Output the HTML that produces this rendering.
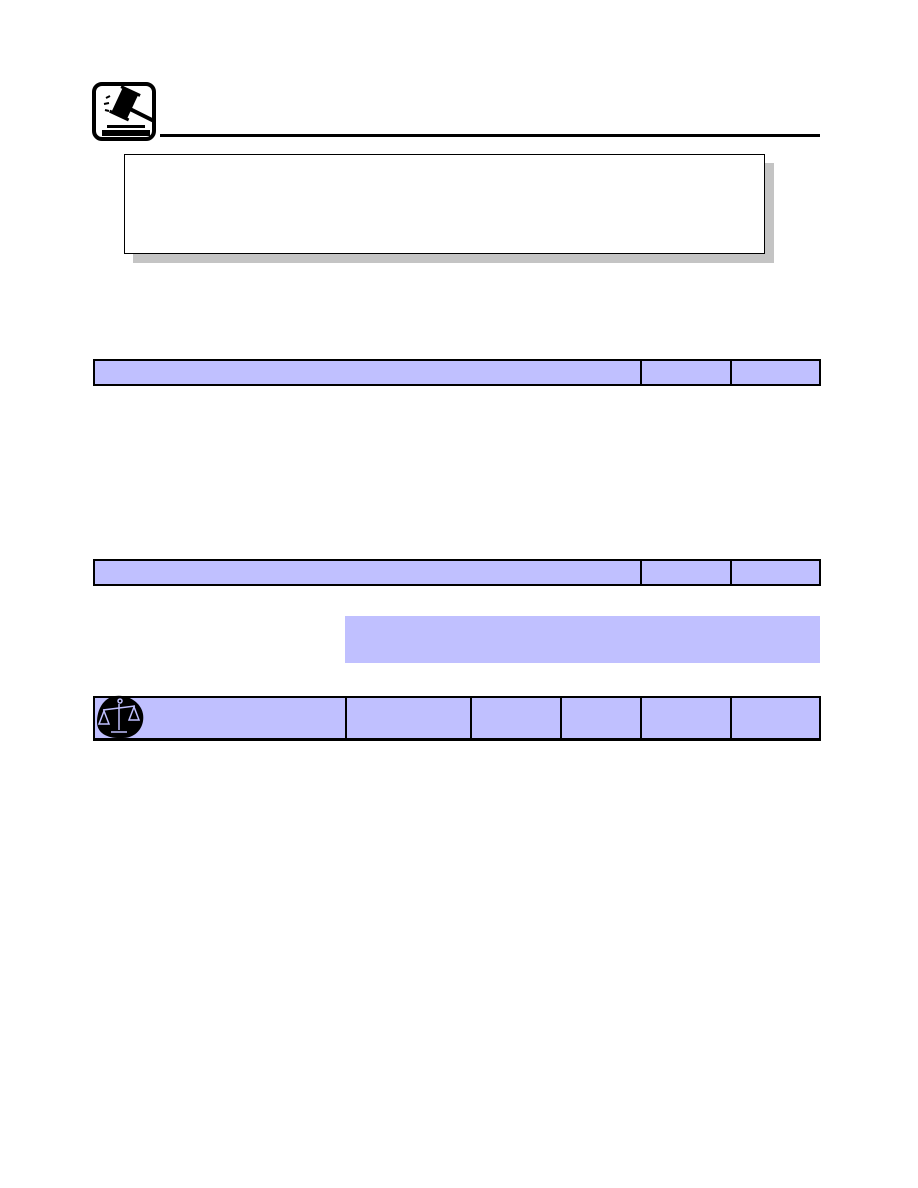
<!DOCTYPE html>
<html><head><style>
body{margin:0;width:918px;height:1188px;background:#fff;position:relative;font-family:"Liberation Sans",sans-serif}
.a{position:absolute;box-sizing:border-box}
.bar{background:#c0c0ff;border:2px solid #000}
.v{position:absolute;top:0;bottom:0;border-left:2px solid #000}
</style></head><body>
<svg class="a" style="left:90px;top:80px" width="70" height="64" viewBox="0 0 70 64">
<rect x="4" y="4" width="60" height="55" rx="8" fill="#fff" stroke="#000" stroke-width="4"/>
<g transform="rotate(25 34 24)"><rect x="26" y="10" width="17" height="26" fill="#000"/><rect x="24" y="8" width="21" height="3" fill="#000"/><rect x="24" y="35" width="21" height="3" fill="#000"/></g>
<line x1="40" y1="29" x2="64" y2="41" stroke="#000" stroke-width="4"/>
<path d="M16 18l4-2M14 24l5-1M15 30l4 1" stroke="#000" stroke-width="2"/>
<rect x="17" y="45" width="38" height="3" fill="#000"/><rect x="12" y="50" width="48" height="6" fill="#000"/>
</svg>
<div class="a" style="left:160px;top:134px;width:660px;height:3px;background:#000"></div>
<div class="a" style="left:133px;top:163px;width:641px;height:100px;background:#c4c4c4"></div>
<div class="a" style="left:124px;top:154px;width:641px;height:100px;background:#fff;border:1px solid #000"></div>
<div class="a bar" style="left:93px;top:359px;width:728px;height:27px"><div class="v" style="left:545px"></div><div class="v" style="left:635px"></div></div>
<div class="a bar" style="left:93px;top:559px;width:728px;height:27px"><div class="v" style="left:545px"></div><div class="v" style="left:635px"></div></div>
<div class="a" style="left:345px;top:616px;width:475px;height:47px;background:#c0c0ff"></div>
<div class="a bar" style="left:93px;top:696px;width:728px;height:45px;border-bottom-width:3px"><div class="v" style="left:250px"></div><div class="v" style="left:375px"></div><div class="v" style="left:465px"></div><div class="v" style="left:545px"></div><div class="v" style="left:635px"></div></div>
<svg class="a" style="left:95px;top:694px" width="52" height="46" viewBox="0 0 52 46">
<path d="M20 2C32 0 46 8 48 20C50 32 42 44 28 44C14 45 2 40 2 28C2 16 8 4 20 2Z" fill="#000"/>
<g stroke="#c0c0ff" stroke-width="1.5" fill="none"><line x1="24" y1="10" x2="24" y2="36"/><line x1="8" y1="16" x2="40" y2="12"/><line x1="16" y1="38" x2="32" y2="38"/><path d="M4 30l5-13 5 13zM4 30h10M34 26l5-13 5 13zM34 26h10"/><circle cx="25" cy="7" r="2"/></g>
</svg>
</body></html>
